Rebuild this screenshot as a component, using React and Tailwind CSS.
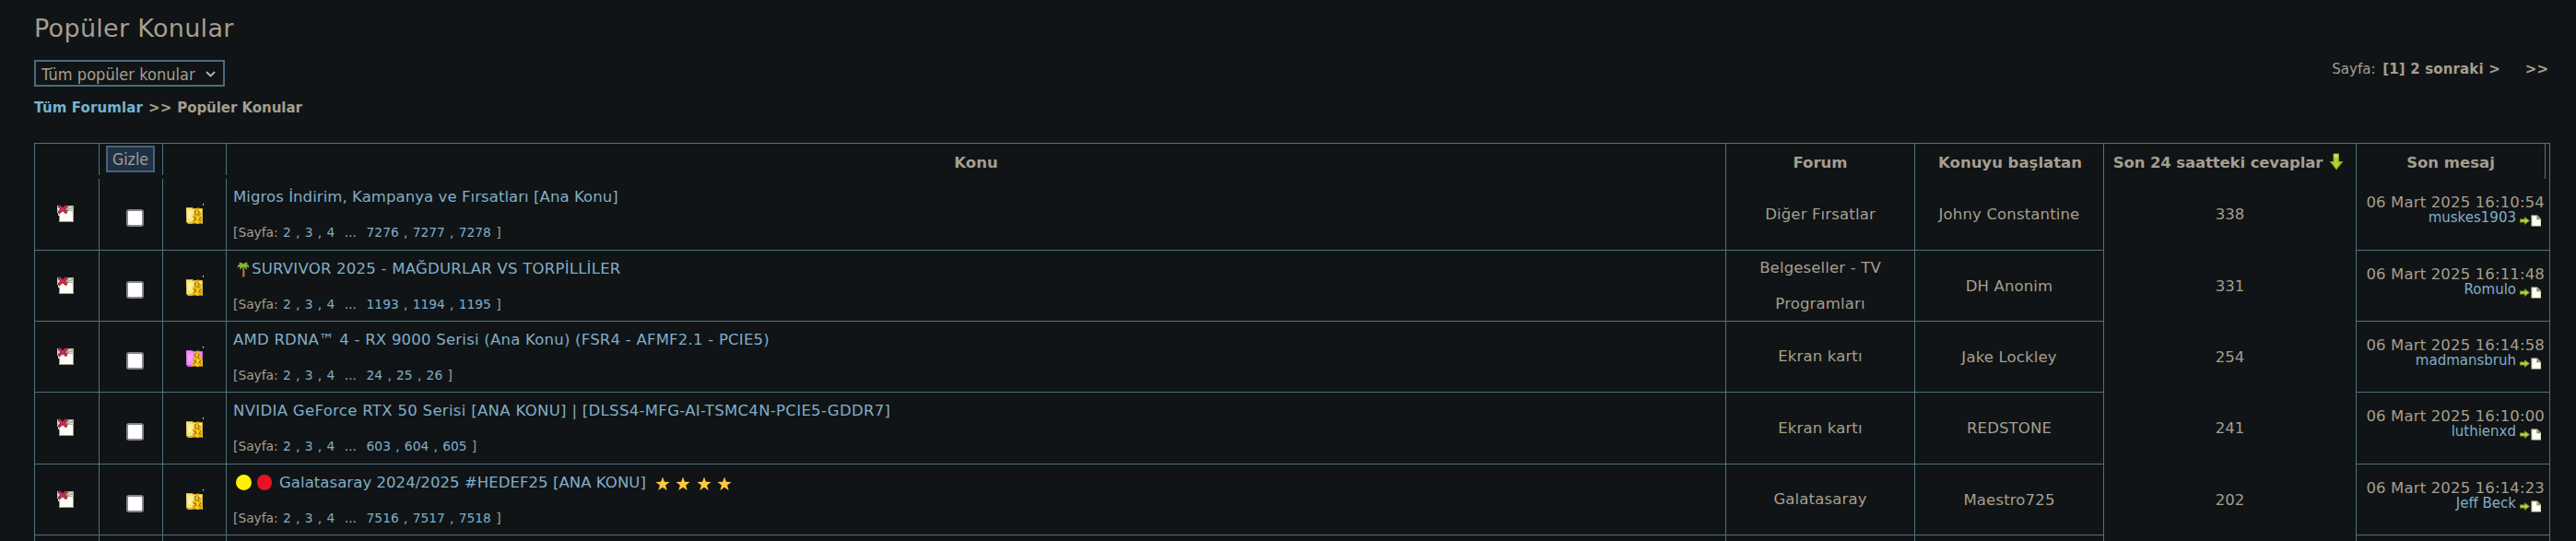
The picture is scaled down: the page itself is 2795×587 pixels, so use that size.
import React from 'react';

const GRID = 'grid grid-rows-[100%] grid-cols-[70px_69px_69px_1627px_205px_205px_274px_211px]';
const LINE = 'border-[#50727c]';

const topics = [
  {
    title: 'Migros İndirim, Kampanya ve Fırsatları [Ana Konu]',
    tracking: 'tracking-[0.07px]',
    pages: ['7276', '7277', '7278'],
    forum: 'Diğer Fırsatlar',
    starter: 'Johny Constantine',
    replies: 338,
    date: '06 Mart 2025 16:10:54',
    user: 'muskes1903',
    height: 'h-[78px]',
  },
  {
    title: 'SURVIVOR 2025 - MAĞDURLAR VS TORPİLLİLER',
    tracking: 'tracking-[0.24px]',
    prefix: 'palm',
    pages: ['1193', '1194', '1195'],
    forum: 'Belgeseller - TV Programları',
    starter: 'DH Anonim',
    replies: 331,
    date: '06 Mart 2025 16:11:48',
    user: 'Romulo',
    height: 'h-[77px]',
  },
  {
    title: 'AMD RDNA™ 4 - RX 9000 Serisi (Ana Konu) (FSR4 - AFMF2.1 - PCIE5)',
    tracking: 'tracking-[0.23px]',
    pages: ['24', '25', '26'],
    forum: 'Ekran kartı',
    starter: 'Jake Lockley',
    replies: 254,
    date: '06 Mart 2025 16:14:58',
    user: 'madmansbruh',
    pink: true,
    height: 'h-[77px]',
  },
  {
    title: 'NVIDIA GeForce RTX 50 Serisi [ANA KONU] | [DLSS4-MFG-AI-TSMC4N-PCIE5-GDDR7]',
    tracking: 'tracking-[0.32px]',
    pages: ['603', '604', '605'],
    forum: 'Ekran kartı',
    starter: 'REDSTONE',
    replies: 241,
    date: '06 Mart 2025 16:10:00',
    user: 'luthienxd',
    height: 'h-[78px]',
  },
  {
    title: 'Galatasaray 2024/2025 #HEDEF25 [ANA KONU]',
    tracking: 'tracking-[0.06px]',
    prefix: 'balls',
    stars: 4,
    pages: ['7516', '7517', '7518'],
    forum: 'Galatasaray',
    starter: 'Maestro725',
    replies: 202,
    date: '06 Mart 2025 16:14:23',
    user: 'Jeff Beck',
    height: 'h-[77px]',
  },
];

const EnvelopeIcon = () => (
  <svg width="18" height="19" viewBox="0 0 18 19">
    <path d="M2 3h16v16H2z" fill="#9c9884" />
    <path d="M3 7h14v11H3z" fill="#fdfbf2" />
    <path d="M0 1h3v11H1V9H0z" fill="#d9d6cc" />
    <path d="M10 1h8v6h-6z" fill="#a9b096" />
    <path d="M12 4l4-2M13 6l4-1" stroke="#e9ecdc" strokeWidth="1.2" />
    <path d="M1.500 1l9 8M10.500 1l-9 8" stroke="#7e1b33" strokeWidth="3.2" />
    <path d="M2 1.500l8 7M10 1.500l-8 7" stroke="#d92b50" strokeWidth="1.800" />
  </svg>
);

const FolderIcon = ({ pink }) => (
  <svg width="20" height="23" viewBox="0 0 20 23">
    <path d="M1 4h7l1 1h10v17H3l-2-2z" fill={pink ? '#c565d2' : '#d3b03a'} />
    <path d="M1 5h6v1h11v14H2z" fill={pink ? '#f58cf8' : '#f7e67c'} />
    <path d="M3 8h5v8H3z" fill={pink ? '#fa9dfb' : '#fbf0a0'} />
    <path d="M10 5l1 2 2-3 1 2 1-3v5l3 2-1 3 2 2v7H7l1-4 2-2-3-2 3-3z" fill="#e6b414" />
    <path d="M11 7l-1 3 3 2M15 8l-1 3 1 2M9 15l3 1-3 3M17 15l-2 2 2 2M8 21.500h4M15 21.500h3" stroke="#94640c" strokeWidth="1" fill="none" />
    <path d="M12 9l1 2M13 14l1 3M11 19l3 1" stroke="#ffe24a" strokeWidth="1.300" />
    <path d="M19 0h1v1.500h-1z" fill="#fff" />
  </svg>
);

const PalmIcon = () => (
  <svg width="14" height="17" viewBox="0 0 14 17" className="ml-[4px] mr-[2px]">
    <path d="M6 5.500c.5 4 .4 7.500.1 11h2.200c.3-3.500.2-7.500-.5-11z" fill="#bd7448" />
    <path d="M7 3C5.500.3 2.800.3 2 1.800c1 .1 1.600.4 2 1C2 2.500.6 4 .8 6.500 1.800 5.500 2.800 5 3.800 5.200c-.8 1-.8 2.500-.2 3.600C4.500 7.200 5.600 6 7 5.300c1.400.7 2.500 1.900 3.400 3.500.6-1.100.6-2.600-.2-3.600 1 0 2 .4 3 1.300.2-2.500-1.200-4-3.200-3.700.4-.6 1-.9 2-1C11.200.3 8.500.3 7 3z" fill="#85c227" />
  </svg>
);

const Star = () => (
  <svg width="16" height="16" viewBox="0 0 16 16">
    <path d="M8 .5l1.900 5.300 5.600.2-4.400 3.400 1.600 5.500L8 11.700l-4.700 3.200 1.600-5.500L.5 6l5.600-.2z" fill="#ffc83d" />
  </svg>
);

const DownArrow = () => (
  <svg width="16" height="19" viewBox="0 0 16 19">
    <path d="M4.500.5h6.500V9h4.500L8 18.500.5 9h4z" fill="#87a71a" />
    <path d="M5.500 1.500h4V10H13l-5 6.500L3 10h2.500z" fill="#b4d43a" />
    <path d="M5.500 1.500h4v3h-4z" fill="#cfe57c" />
  </svg>
);

const GotoIcon = () => (
  <svg width="24" height="13" viewBox="0 0 24 13">
    <path d="M0 4.500h5V2l6 4.500L5 11V8.500H0z" fill="#7d981f" />
    <path d="M1 5.500h5V4l3.500 2.500L6 9V7.500H1z" fill="#b8d444" />
    <path d="M12.500.5H19l4 4v8H12.500z" fill="#dcddc4" />
    <path d="M14 2h4v4h4v5.500h-8z" fill="#fffff4" />
    <path d="M18.500.5v4.500H23z" fill="#8e9078" />
  </svg>
);

const Cell = ({ className = '', children }) => (
  <div className={`border-l border-b ${LINE} ${className}`}>{children}</div>
);

const TopicRow = ({ topic }) => (
  <div className={`${GRID} ${topic.height}`}>
    <Cell className="pl-6 pt-[28px]"><EnvelopeIcon /></Cell>
    <Cell className="pl-[29px] pt-[33px]">
      <div className="h-[19px] w-[19px] rounded-[3px] border-2 border-[#85858f] bg-white" />
    </Cell>
    <Cell className="pl-6 pt-[27px]"><FolderIcon pink={topic.pink} /></Cell>
    <Cell className="overflow-hidden pl-[7px] pt-[1px]">
      <div className={`flex h-[39px] items-center whitespace-pre text-[16.5px] text-[#80aec8] ${topic.tracking}`}>
        {topic.prefix === 'palm' && <PalmIcon />}
        {topic.prefix === 'balls' && (
          <div className="ml-[3px] mr-[8px] flex gap-[6px] pb-[2px]">
            <span className="h-[16.5px] w-[16.5px] rounded-full bg-[#fff100]" />
            <span className="h-[16.5px] w-[16.5px] rounded-full bg-[#e81224]" />
          </div>
        )}
        <span>{topic.title}</span>
        {topic.stars && (
          <div className="ml-[10px] flex gap-[6.4px]">
            {Array.from({ length: topic.stars }, (_, i) => <Star key={i} />)}
          </div>
        )}
      </div>
      <div className="flex h-[37px] items-center whitespace-pre text-[13.8px] text-[#80aec8] [word-spacing:0.9px]">
        <span className="text-[#a69e90]">[Sayfa: </span>
        <span>{'2 , 3 , 4  ...  '}{topic.pages.join(' , ')} </span>
        <span className="text-[#a69e90]">]</span>
      </div>
    </Cell>
    <Cell className="flex items-center justify-center px-6 pt-[1px] text-center leading-[38.5px] tracking-[0.15px]">
      <span className="-my-1">{topic.forum}</span>
    </Cell>
    <Cell className="flex items-center justify-center pt-[2px] tracking-[0.15px]">{topic.starter}</Cell>
    <div className={`flex items-center justify-center border-l pt-[1px] ${LINE}`}>{topic.replies}</div>
    <Cell className="border-r pr-[5px] pt-[17px] text-right leading-[17px]">
      <div className="whitespace-nowrap tracking-[0.15px]">{topic.date}</div>
      <div className="flex items-start justify-end pr-[3px] text-[15px] leading-[16px] text-[#80aec8]">
        <span>{topic.user}</span>
        <span className="ml-[4px] mt-[5px]"><GotoIcon /></span>
      </div>
    </Cell>
  </div>
);

const App = () => {
  return (
    <div className="h-[587px] w-[2795px] overflow-hidden bg-[#101416] pl-[37px] text-[16.5px] text-[#a69e90] font-['DejaVu_Sans',sans-serif]">
      <h1 className="h-[65px] pt-[12px] text-[27px] leading-[38px] tracking-[0.3px]">Popüler Konular</h1>
      <div className="flex h-[90px] w-[2730px] justify-between">
        <div>
          <div className="flex h-[29px] w-[207px] items-center justify-between border-2 border-[#4b6a79] pl-[6px] pr-2 pt-[1px] text-[18px] font-['DejaVu_Sans_Condensed','DejaVu_Sans',sans-serif] [font-stretch:condensed]">
            <span className="whitespace-nowrap tracking-[0.05px]">Tüm popüler konular</span>
            <svg width="11" height="7" viewBox="0 0 11 7" fill="none" stroke="#bcb6a8" strokeWidth="1.800">
              <path d="M1 1l4.500 4.500L10 1" />
            </svg>
          </div>
          <div className="mt-[11px] flex gap-[6px] text-[15px] font-bold leading-[24px]">
            <span className="text-[#73b4d0] tracking-[0.12px]">Tüm Forumlar</span>
            <span>&gt;&gt;</span>
            <span className="-tracking-[0.05px]">Popüler Konular</span>
          </div>
        </div>
        <div className="flex h-5 items-center whitespace-pre pr-[2px] text-[15px]">
          <span className="mr-[3px]">Sayfa: </span>
          <b className="tracking-[0.15px]">[1] 2 sonraki &gt;</b>
          <b className="ml-[27px]">&gt;&gt;</b>
        </div>
      </div>

      <div className={`w-[2730px] border-t ${LINE}`}>
        <div className={`${GRID} h-[38px] text-center font-bold leading-[41px]`}>
          <div className={`border-l ${LINE}`} />
          <div className={`h-[34px] border-l pl-[7px] pt-[2px] ${LINE}`}>
            <button className="flex h-[29px] w-[53px] items-center justify-center border-2 border-[#456478] bg-[#1f3144] pt-[2px] text-[17.500px] font-normal leading-none font-['DejaVu_Sans_Condensed','DejaVu_Sans',sans-serif] [font-stretch:condensed]">
              Gizle
            </button>
          </div>
          <div className={`h-[34px] border-l ${LINE}`} />
          <div className={`h-[34px] border-l ${LINE}`}>Konu</div>
          <div className={`border-l ${LINE}`}>Forum</div>
          <div className={`border-l pl-[2px] ${LINE}`}>Konuyu başlatan</div>
          <div className={`flex justify-center gap-[7px] border-l pr-[3px] ${LINE}`}>
            <span className="-tracking-[0.12px]">Son 24 saatteki cevaplar</span>
            <span className="mt-[10px]"><DownArrow /></span>
          </div>
          <div className={`border-x pr-[4px] ${LINE}`}>
            <div className={`h-full border-r ${LINE}`}>Son mesaj</div>
          </div>
        </div>
        {topics.map((topic) => (
          <TopicRow key={topic.title} topic={topic} />
        ))}
        <div className={`${GRID} h-[6px]`}>
          {Array.from({ length: 8 }, (_, i) => (
            <div key={i} className={`border-l last:border-r ${LINE}`} />
          ))}
        </div>
      </div>
    </div>
  );
};

export default App;
